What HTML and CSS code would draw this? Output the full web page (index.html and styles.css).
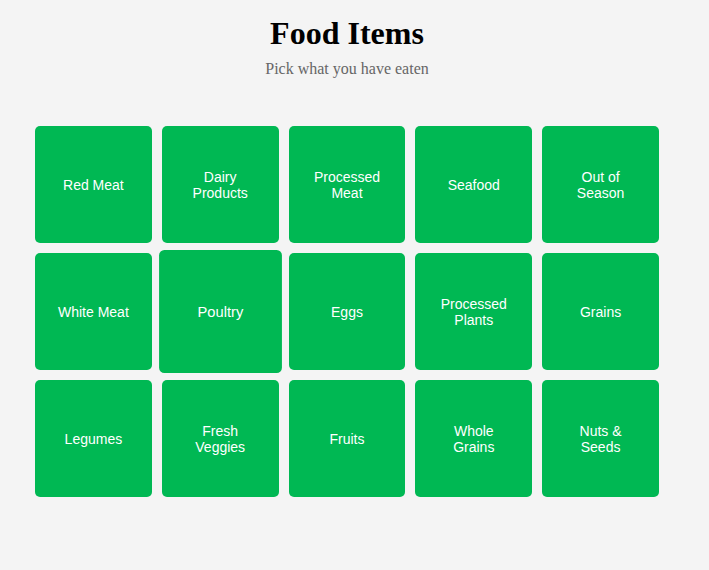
FILE: index.html
```html
<!DOCTYPE html>
<html>
<head>
<meta charset="utf-8">
<title>Food Items</title>
<link rel="stylesheet" href="styles.css">
</head>
<body>
<div class="page">
  <h1 class="title">Food Items</h1>
  <p class="subtitle">Pick what you have eaten</p>
  <div class="grid">
    <div class="tile">Red Meat</div>
    <div class="tile">Dairy<br>Products</div>
    <div class="tile">Processed<br>Meat</div>
    <div class="tile">Seafood</div>
    <div class="tile">Out of<br>Season</div>
    <div class="tile">White Meat</div>
    <div class="tile tile-hover">Poultry</div>
    <div class="tile">Eggs</div>
    <div class="tile">Processed<br>Plants</div>
    <div class="tile">Grains</div>
    <div class="tile">Legumes</div>
    <div class="tile">Fresh<br>Veggies</div>
    <div class="tile">Fruits</div>
    <div class="tile">Whole<br>Grains</div>
    <div class="tile">Nuts &amp;<br>Seeds</div>
  </div>
</div>
</body>
</html>
```
FILE: styles.css
```css
html, body {
  margin: 0;
  padding: 0;
  background: #f4f4f4;
}
.page {
  width: 694px;
  padding-top: 15px;
  text-align: center;
  font-family: "Liberation Serif", "Times New Roman", serif;
}
.title {
  margin: 0;
  font-size: 32px;
  font-weight: bold;
  color: #000;
}
.subtitle {
  margin: 8px 0 0;
  font-size: 16px;
  color: #666;
}
.grid {
  display: grid;
  grid-template-columns: repeat(5, 116.8px);
  grid-auto-rows: 117px;
  column-gap: 10px;
  row-gap: 10px;
  justify-content: center;
  margin-top: 48px;
}
.tile {
  background: #00b853;
  border-radius: 5px;
  color: #fff;
  font-family: "Liberation Sans", Arial, sans-serif;
  font-size: 14px;
  line-height: 16px;
  display: flex;
  align-items: center;
  justify-content: center;
  text-align: center;
}
.tile-hover {
  transform: scale(1.05);
}
```
